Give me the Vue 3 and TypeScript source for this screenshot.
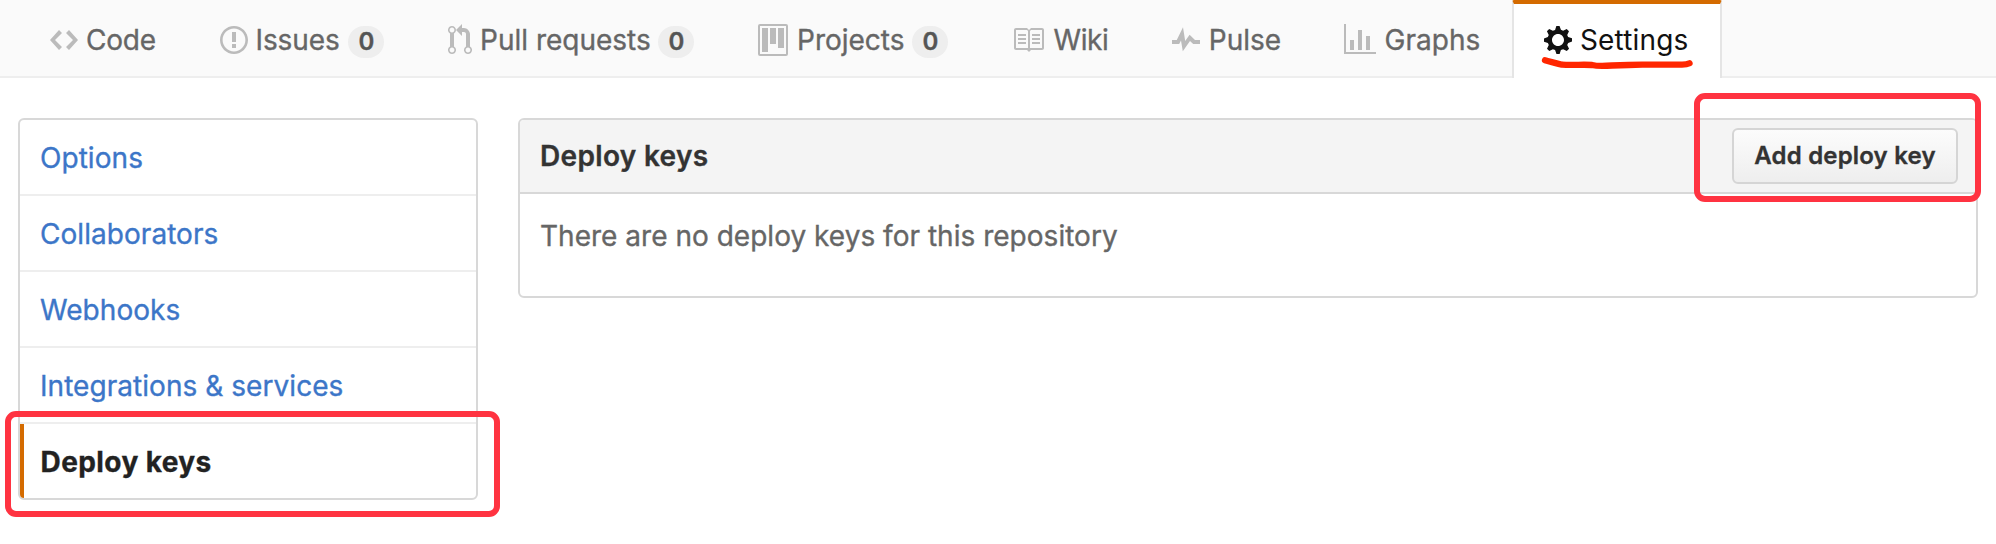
<script setup lang="ts">
interface Tab {
  id: string
  label: string
  count?: number
  iconWidth: number
  icon: string
  selected?: boolean
}

const tabs: Tab[] = [
  { id: 'code', label: 'Code', iconWidth: 14, icon: 'M9.5 3L8 4.5 11.5 8 8 11.5 9.5 13 14 8 9.5 3zm-5 0L0 8l4.5 5L6 11.5 2.5 8 6 4.5 4.5 3z' },
  { id: 'issues', label: 'Issues', count: 0, iconWidth: 14, icon: 'M7 2.3c3.14 0 5.7 2.56 5.7 5.7s-2.56 5.7-5.7 5.7A5.71 5.71 0 0 1 1.3 8c0-3.14 2.56-5.7 5.7-5.7zM7 1C3.14 1 0 4.14 0 8s3.14 7 7 7 7-3.14 7-7-3.14-7-7-7zm1 3H6v5h2V4zm0 6H6v2h2v-2z' },
  { id: 'pulls', label: 'Pull requests', count: 0, iconWidth: 12, icon: 'M11 11.28V5c-.03-.78-.34-1.47-.94-2.06C9.46 2.35 8.78 2.03 8 2H7V0L4 3l3 3V4h1c.27.02.48.11.69.31.21.2.3.42.31.69v6.28A1.993 1.993 0 0 0 10 15a1.993 1.993 0 0 0 1-3.72zm-1 2.92c-.66 0-1.2-.55-1.2-1.2 0-.65.55-1.2 1.2-1.2.65 0 1.2.55 1.2 1.2 0 .65-.55 1.2-1.2 1.2zM4 3c0-1.11-.89-2-2-2a1.993 1.993 0 0 0-1 3.72v6.56A1.993 1.993 0 0 0 2 15a1.993 1.993 0 0 0 1-3.72V4.72c.59-.34 1-.98 1-1.72zm-.8 10c0 .66-.55 1.2-1.2 1.2-.65 0-1.2-.55-1.2-1.2 0-.65.55-1.2 1.2-1.2.65 0 1.2.55 1.2 1.2zM2 4.2C1.34 4.2.8 3.65.8 3c0-.65.55-1.2 1.2-1.2.65 0 1.2.55 1.2 1.2 0 .65-.55 1.2-1.2 1.2z' },
  { id: 'projects', label: 'Projects', count: 0, iconWidth: 15, icon: 'M10 12h3V2h-3v10zm-4-2h3V2H6v8zm-4 4h3V2H2v12zm-1 1h13V1H1v14zM14 0H1a1 1 0 0 0-1 1v14a1 1 0 0 0 1 1h13a1 1 0 0 0 1-1V1a1 1 0 0 0-1-1z' },
  { id: 'wiki', label: 'Wiki', iconWidth: 16, icon: 'M3 5h4v1H3V5zm0 3h4V7H3v1zm0 2h4V9H3v1zm11-5h-4v1h4V5zm0 2h-4v1h4V7zm0 2h-4v1h4V9zm2-6v9c0 .55-.45 1-1 1H9.5l-1 1-1-1H2c-.55 0-1-.45-1-1V3c0-.55.45-1 1-1h5.5l1 1 1-1H15c.55 0 1 .45 1 1zm-8 .5L7.5 3H2v9h6V3.5zm7-.5H9.5l-.5.5V12h6V3z' },
  { id: 'pulse', label: 'Pulse', iconWidth: 14, icon: 'M11.5 8L8.8 5.4 6.6 8.5 5.5 1.6 2.38 8H0v2h3.6l.9-1.8.9 5.4L9 8.5l1.6 1.5H14V8h-2.5z' },
  { id: 'graphs', label: 'Graphs', iconWidth: 16, icon: 'M16 14v1H0V0h1v14h15zM5 13H3V8h2v5zm4 0H7V3h2v10zm4 0h-2V6h2v7z' },
  { id: 'settings', label: 'Settings', iconWidth: 14, selected: true, icon: 'M14 8.77v-1.6l-1.94-.64-.45-1.09.88-1.84-1.13-1.13-1.81.91-1.09-.45-.69-1.92h-1.6l-.63 1.94-1.11.45-1.84-.88-1.13 1.13.91 1.81-.45 1.09L0 7.23v1.59l1.94.64.45 1.09-.88 1.84 1.13 1.13 1.81-.91 1.09.45.69 1.92h1.59l.63-1.94 1.11-.45 1.84.88 1.13-1.13-.92-1.81.47-1.09L14 8.75v.02zM7 11c-1.66 0-3-1.34-3-3s1.34-3 3-3 3 1.34 3 3-1.34 3-3 3z' },
]

const menu: string[] = ['Options', 'Collaborators', 'Webhooks', 'Integrations & services', 'Deploy keys']
const activeItem = 'Deploy keys'
</script>

<template>
  <div class="page">
    <nav class="tabs">
      <a v-for="tab in tabs" :key="tab.id" class="tab" :class="[tab.id, { selected: tab.selected }]">
        <svg class="icon" :width="tab.iconWidth * 2" height="32" :viewBox="`0 0 ${tab.iconWidth} 16`" aria-hidden="true">
          <path fill-rule="evenodd" :d="tab.icon" />
        </svg>
        <span class="label">{{ tab.label }}</span>
        <span v-if="tab.count !== undefined" class="counter">{{ tab.count }}</span>
        <svg v-if="tab.selected" class="underline" width="160" height="20" viewBox="0 0 160 20" aria-hidden="true">
          <path d="M5 6.300C9 7.600 15 8.600 22 10.700C34 11.300 44 10.300 52 11C58 12.500 66 12 72 11.500C90 11.300 90 10.500 106 10.700L142 10.700C146 10.700 148 10.100 149.500 9.300" />
        </svg>
      </a>
    </nav>

    <main class="content">
      <aside class="menu">
        <a v-for="item in menu" :key="item" class="menu-item" :class="{ active: item === activeItem }">{{ item }}</a>
        <span class="mark menu-mark"></span>
      </aside>

      <section class="panel">
        <header class="panel-head">
          <h3 class="title">Deploy keys</h3>
          <button class="btn" type="button">Add deploy key</button>
        </header>
        <p class="empty">There are no deploy keys for this repository</p>
        <span class="mark button-mark"></span>
      </section>
    </main>
  </div>
</template>

<style>
body { background: #fff; }
</style>

<style scoped>
.page,
.page * { box-sizing: border-box; }
.page {
  height: 544px;
  overflow: hidden;
  background: #fff;
  font-family: Inter, "Liberation Sans", sans-serif;
  font-size: 28px;
  line-height: 40px;
  -webkit-text-stroke-width: 0.35px;
}
.tabs {
  display: flex;
  height: 78px;
  padding-left: 18px;
  background: #fafafa;
  border-bottom: 2px solid #eee;
}
.tab {
  position: relative;
  display: flex;
  flex: none;
  height: 78px;
  padding: 16px 30px 0;
  border: 2px solid transparent;
  border-top-width: 4px;
  border-bottom: 0;
  color: #666;
  white-space: nowrap;
}
.icon {
  flex: none;
  margin: 4px 8px 0 0;
  fill: #bbb;
}
.code { width: 170px; }
.code .label { letter-spacing: -0.25px; }
.issues { width: 228px; }
.issues .label { margin-left: -0.5px; letter-spacing: -0.1px; }
.pulls { width: 310px; }
.pulls .label { letter-spacing: 0; }
.projects { width: 254px; }
.projects .label { margin-left: 1px; }
.wiki { width: 160px; }
.wiki .label { margin-left: 1.500px; letter-spacing: -0.4px; }
.pulse { width: 172px; }
.pulse .label { margin-left: 0.8px; }
.graphs { width: 200px; }
.graphs .label { margin-left: 0.6px; }
.settings { width: 210px; }
.settings .label { letter-spacing: 0.15px; }
.tab.selected {
  color: #111;
  background: #fff;
  border-color: #d46b00 #e5e5e5 transparent;
  border-radius: 2px 2px 0 0;
  -webkit-text-stroke-width: 0;
}
.selected .icon { fill: #111; }
.counter {
  width: 36px;
  height: 32px;
  margin: 6px 0 0 auto;
  padding-left: 1px;
  border-radius: 16px;
  background: #eee;
  color: #555;
  font-size: 24px;
  font-weight: 600;
  line-height: 31px;
  text-align: center;
}
.underline {
  position: absolute;
  left: 26px;
  top: 50px;
  fill: none;
  stroke: #ff2600;
  stroke-width: 6.3;
  stroke-linecap: round;
  stroke-linejoin: round;
}
.content {
  display: flex;
  align-items: flex-start;
  gap: 40px;
  padding: 40px 18px 0;
}
.menu {
  position: relative;
  flex: none;
  width: 460px;
  border: 2px solid #d8d8d8;
  border-radius: 6px;
}
.menu-item {
  display: block;
  height: 76px;
  padding: 18px 20px 0;
  border-bottom: 2px solid #eee;
  color: #3c76c8;
  letter-spacing: 0.05px;
}
.menu-item.active {
  height: 74px;
  padding-left: 16.600px;
  border-bottom: 0;
  border-left: 4px solid #d46b00;
  border-radius: 0 0 0 4px;
  color: #222;
  font-weight: 700;
  letter-spacing: 0.4px;
}
.panel {
  position: relative;
  flex: 1;
  height: 180px;
  border: 2px solid #d8d8d8;
  border-radius: 6px;
}
.panel-head {
  display: flex;
  align-items: center;
  justify-content: space-between;
  height: 74px;
  padding: 0 18px 0 20px;
  border-bottom: 2px solid #d8d8d8;
  border-radius: 4px 4px 0 0;
  background: #f4f4f4;
}
.title {
  margin: 0;
  color: #333;
  font-size: 28px;
  font-weight: 600;
  letter-spacing: 0.33px;
}
.btn {
  width: 226px;
  height: 56px;
  padding: 0 0 1px;
  border: 2px solid #d5d5d5;
  border-radius: 6px;
  background: linear-gradient(#fcfcfc, #eee);
  color: #333;
  font: 600 24px/40px Inter, "Liberation Sans", sans-serif;
  letter-spacing: 0.18px;
}
.empty {
  margin: 0;
  padding: 22px 20px;
  color: #666;
  letter-spacing: 0.02px;
}
.mark {
  position: absolute;
  border: 6px solid #ff3341;
  border-radius: 11px;
  pointer-events: none;
}
.menu-mark {
  left: -15px;
  top: 291px;
  width: 495px;
  height: 106px;
}
.button-mark {
  right: -5px;
  top: -27px;
  width: 287px;
  height: 109px;
}
</style>
